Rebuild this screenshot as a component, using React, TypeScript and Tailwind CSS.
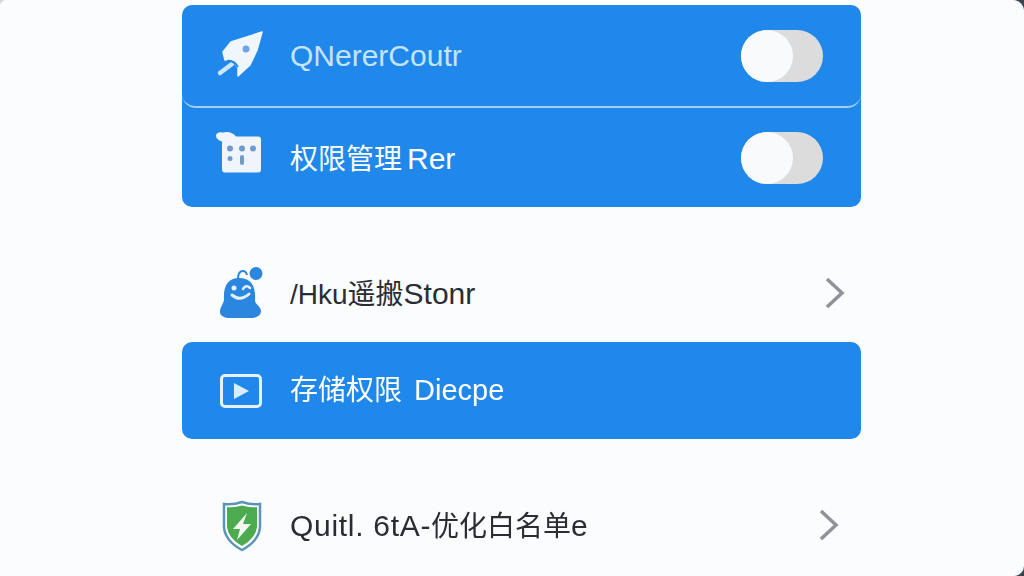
const font = "font-['Liberation_Sans','Noto_Sans_CJK_SC',sans-serif]";

function RocketIcon() {
  return (
    <svg width="70" height="70" viewBox="0 0 70 70" className="shrink-0">
      <path d="M57 11 L26 21 L18 31 L20 39 L28 39 L33 47 L33 55 L45 44 L52 29 Z" fill="#f0f6fd" stroke="#f0f6fd" strokeWidth="1.500" strokeLinejoin="round" />
      <path d="M15 52 L27 43" stroke="#cfe6fb" strokeWidth="4.500" strokeLinecap="round" />
      <path d="M22 40 Q29 39 33 46" stroke="#2088ea" strokeWidth="2" fill="none" />
      <circle cx="41" cy="28" r="3.500" fill="#6ea6e0" />
    </svg>
  );
}

function FolderIcon() {
  return (
    <svg width="70" height="70" viewBox="0 3.5 70 70" className="shrink-0">
      <path d="M17 22 Q11 20 11 16 Q12 12 18 13 Q26 11 31 17 L53 17 Q56 17 56 20 L56 50 Q56 53 53 53 L20 53 Q17 53 17 50 Z" fill="#eff5fb" />
      <g fill="#6f9bcf">
        <circle cx="25" cy="29" r="3" />
        <circle cx="37" cy="29" r="3" />
        <circle cx="48" cy="29" r="3" />
        <circle cx="25" cy="39" r="2.500" />
        <rect x="35" y="35.500" width="4" height="10" rx="2" />
      </g>
    </svg>
  );
}

function BlobIcon() {
  return (
    <svg width="70" height="70" viewBox="0 0 70 70" className="shrink-0">
      <path d="M33 21 Q33 13 38 13 Q41 13 42 17" stroke="#2b86df" strokeWidth="2" fill="none" />
      <circle cx="51" cy="15.500" r="6.500" fill="#2b86df" />
      <path d="M34 20 C23 20 18 28 19 42 C18 47 15 49 15 54 C15 58 20 60 25 60 L45 60 C51 60 56 58 56 53 C56 48 50 47 50 42 C51 28 46 20 34 20 Z" fill="#2b86df" />
      <circle cx="29" cy="30" r="2.500" fill="#e4f0fb" />
      <path d="M38 31 Q41 26 45 30" stroke="#e4f0fb" strokeWidth="2.500" fill="none" strokeLinecap="round" />
      <path d="M27 37 Q35 44 44 36" stroke="#e4f0fb" strokeWidth="3" fill="none" strokeLinecap="round" />
    </svg>
  );
}

function PlayIcon() {
  return (
    <svg width="70" height="70" viewBox="0 0 70 70" className="shrink-0">
      <rect x="16.500" y="19.500" width="39" height="31" rx="3.500" fill="none" stroke="#e6f1fc" strokeWidth="3" />
      <path d="M29 27 L44 35 L29 43 Z" fill="#dcecfb" />
    </svg>
  );
}

function ShieldIcon() {
  return (
    <svg width="70" height="70" viewBox="0 0 70 70" className="shrink-0">
      <path d="M37 12 Q46 15 55 14 L55 37 Q54 51 37 60 Q20 51 19 37 L19 14 Q28 15 37 12 Z" fill="#fff" stroke="#5b94b8" strokeWidth="2.500" />
      <path d="M37 15.500 Q45 18 52 17 L52 37 Q51 48 37 56 Q23 48 22 37 L22 17 Q29 18 37 15.500 Z" fill="#4dab4f" />
      <path d="M42 23 L28 39 L35 39 L32 50 L46 34 L38 34 Z" fill="#f2f8f1" />
    </svg>
  );
}

function Chevron({ className }: { className: string }) {
  return (
    <svg width="20" height="32" viewBox="0 0 20 32" className={className}>
      <path d="M2 2 L17 16 L2 30" fill="none" stroke="#8f9296" strokeWidth="3.500" />
    </svg>
  );
}

function Toggle() {
  return (
    <div className="flex h-[52px] w-[82px] rounded-full bg-[#dcdcdc]">
      <div className="h-full w-[52px] rounded-full bg-[#f8fafb]" />
    </div>
  );
}

export default function App() {
  return (
    <div className={`h-[576px] w-[1024px] overflow-hidden bg-gradient-to-r from-[#d5d8dc] to-[#3c414c] ${font}`}>
      <div className="flex h-full flex-col rounded-tl-[6px] rounded-tr-[11px] rounded-br-[10px] bg-[#fbfcfe] pl-[182px] pt-[5px] blur-[0.6px]">
        <div className="w-[679px] rounded-[10px] bg-[#2088ea] text-white">
          <div className="flex h-[103px] items-center rounded-b-[14px] border-b-2 border-[#a3cff7] pl-[23px] pr-[38px]">
            <RocketIcon />
            <span className="ml-[15px] flex-1 text-[30px] text-[#c4e4fb]">QNererCoutr</span>
            <Toggle />
          </div>
          <div className="flex h-[99px] items-center pl-[23px] pr-[38px]">
            <FolderIcon />
            <span className="ml-[15px] flex-1 pt-[1px] text-[28px]">
              权限管理<span className="ml-[5px] text-[30px]">Rer</span>
            </span>
            <Toggle />
          </div>
        </div>

        <div className="mt-[37px] flex h-[98px] w-[679px] items-center pl-[23px] pr-[16px] text-[#2a2d33]">
          <BlobIcon />
          <span className="ml-[15px] flex-1 text-[28px]">
            /Hku遥搬<span className="text-[30px]">Stonr</span>
          </span>
          <Chevron className="shrink-0" />
        </div>

        <div className="flex h-[97px] w-[679px] items-center rounded-[10px] bg-[#2088ea] pl-[23px] pr-[38px] text-white">
          <PlayIcon />
          <span className="ml-[15px] flex-1 text-[28px]">
            存储权限<span className="ml-[12px] text-[29px]">Diecpe</span>
          </span>
        </div>

        <div className="mt-[37px] flex h-[98px] w-[679px] items-center pl-[23px] pr-[22px] text-[#2a2d33]">
          <ShieldIcon />
          <span className="ml-[15px] flex-1 text-[28px]">
            <span className="text-[30px] tracking-[0.7px]">Quitl. 6tA-</span>优化白名单<span className="text-[30px]">e</span>
          </span>
          <Chevron className="shrink-0" />
        </div>
      </div>
    </div>
  );
}
